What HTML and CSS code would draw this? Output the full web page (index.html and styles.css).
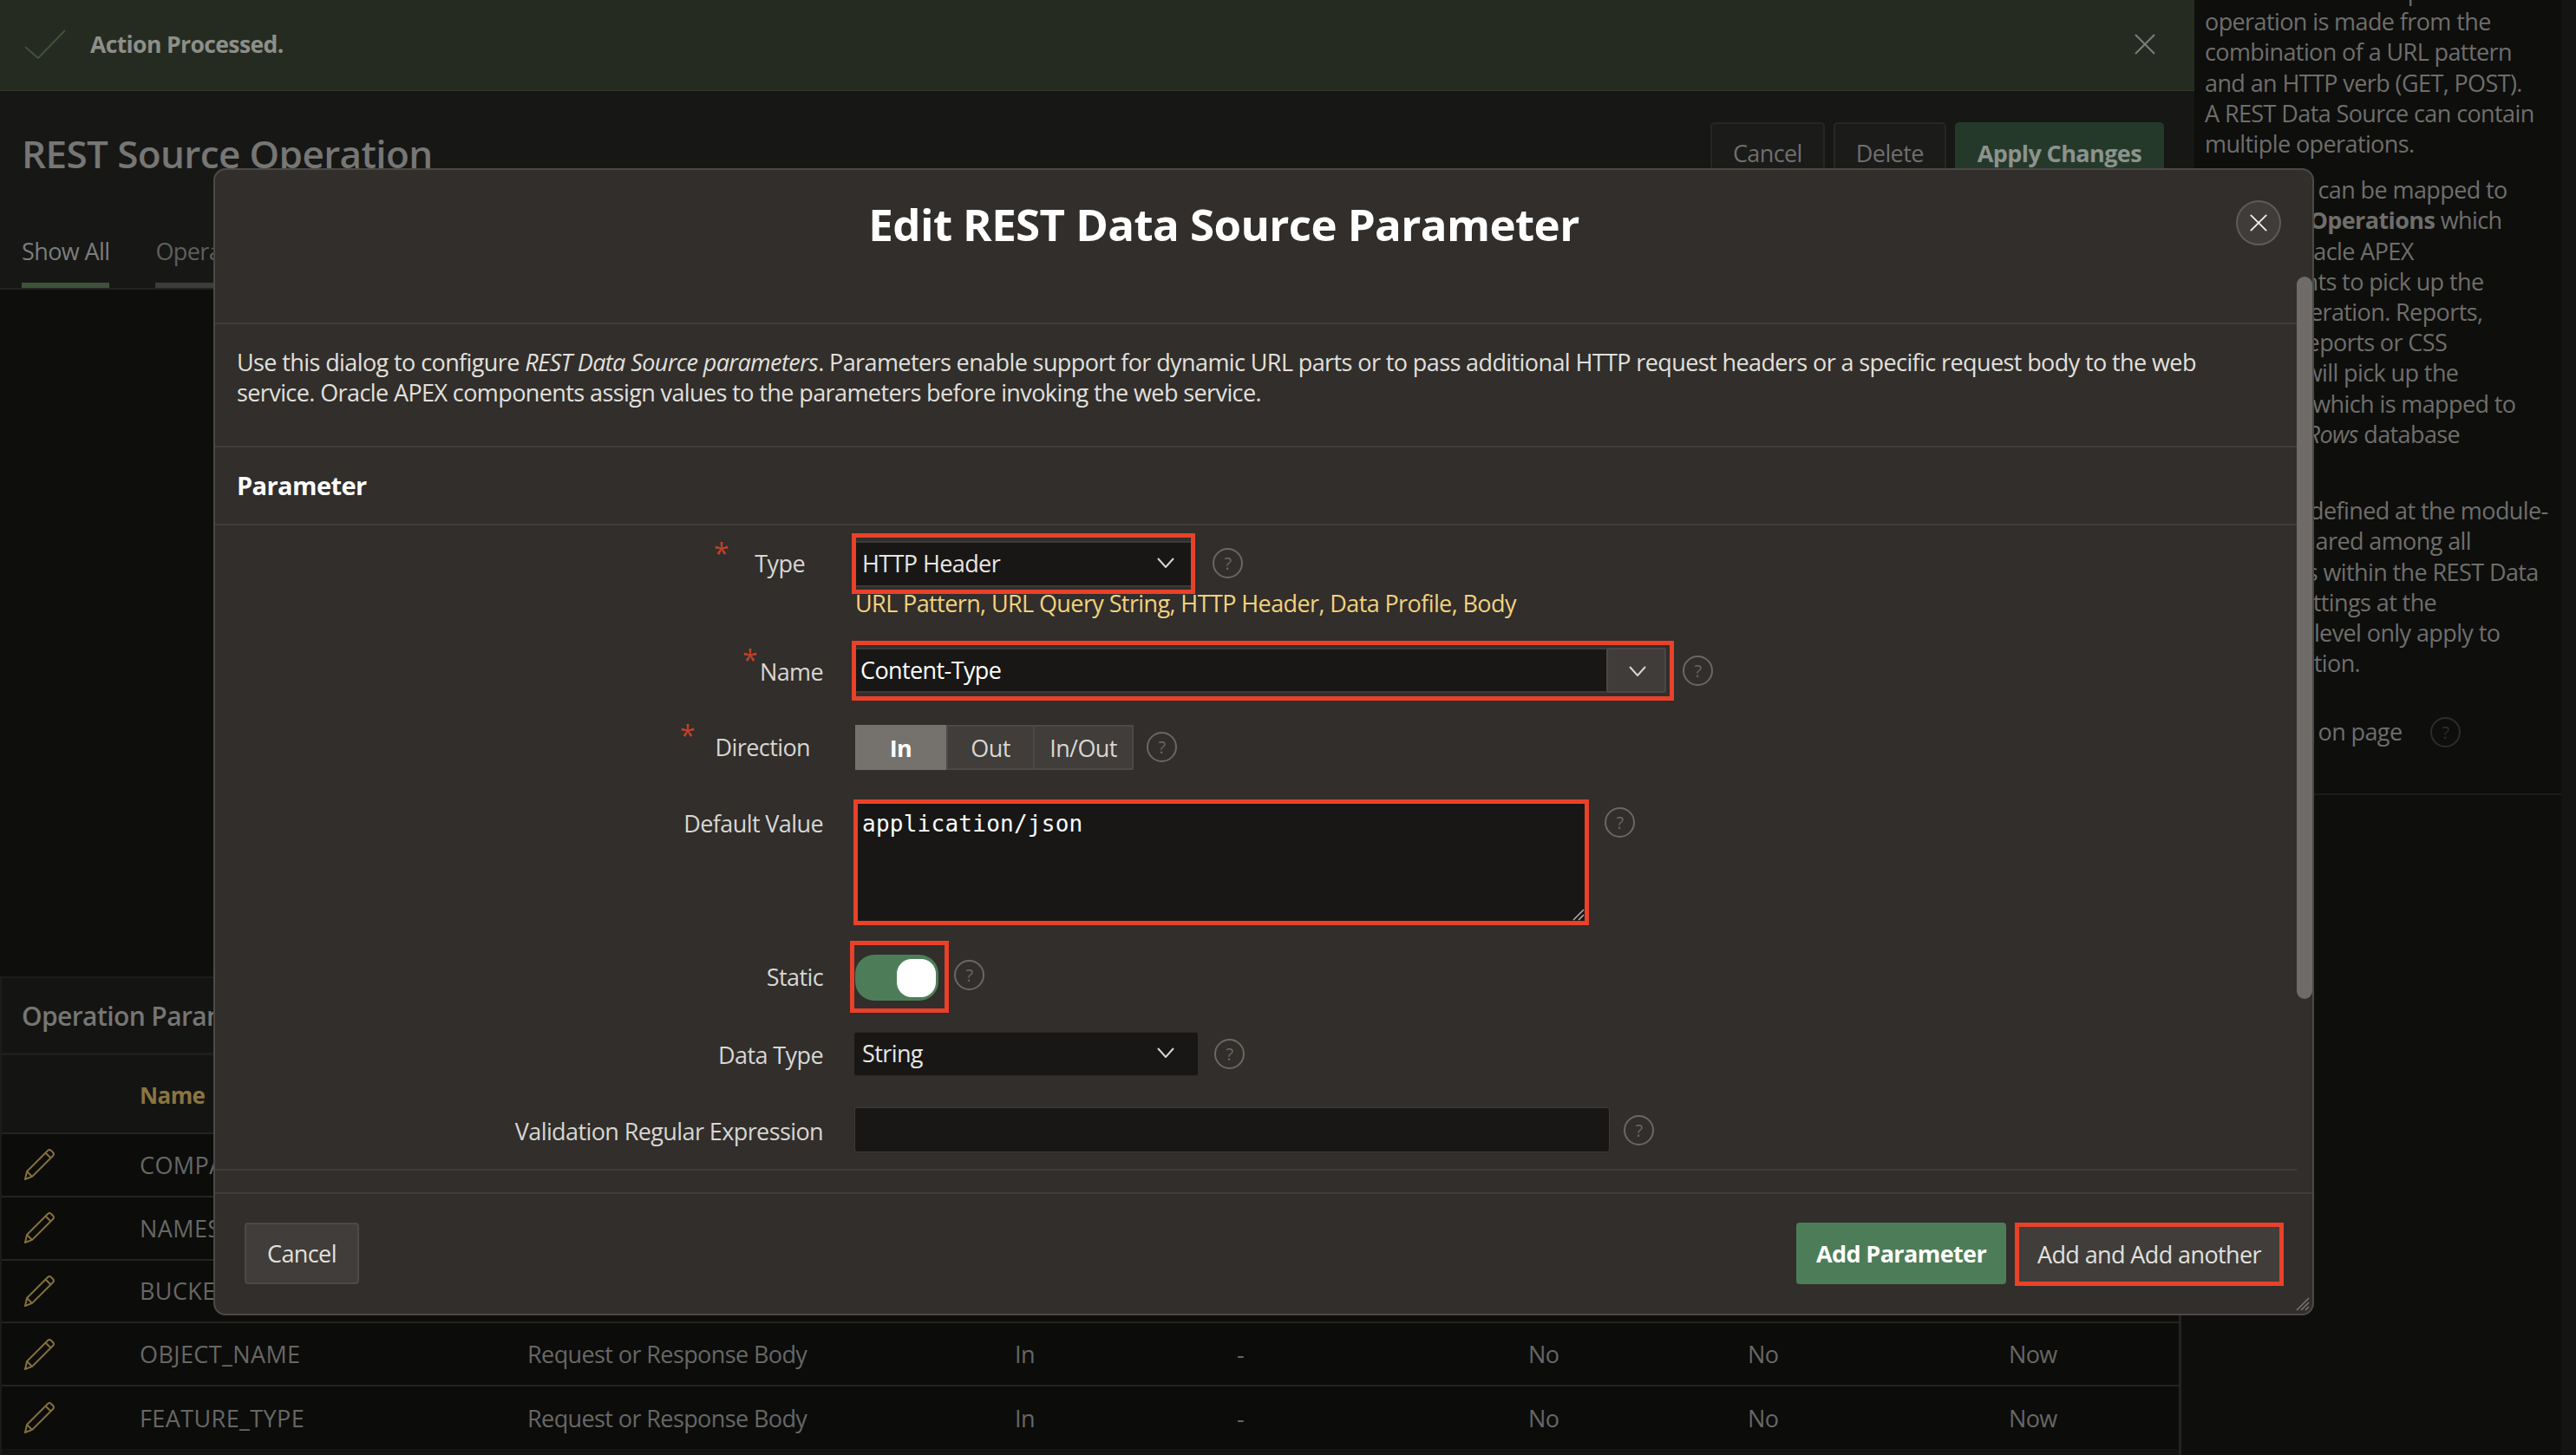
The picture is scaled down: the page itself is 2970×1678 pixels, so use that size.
FILE: index.html
```html
<!DOCTYPE html>
<html lang="en">
<head>
    <meta charset="UTF-8">
    <title>Edit REST Data Source Parameter</title>
    <link rel="stylesheet" href="styles.css">
</head>
<body>
    <div class="page">
        <div class="main">
            <div class="alert">
                <svg class="alert-check" viewBox="0 0 48 34"><path d="M1 20 L16 33 L47 1"/></svg>
                <span class="alert-text">Action Processed.</span>
                <svg class="alert-close" viewBox="0 0 24 24"><path d="M1 1 L23 23 M23 1 L1 23"/></svg>
            </div>

            <div class="page-head">
                <div class="page-title-row">
                    <h1>REST Source Operation</h1>
                    <div class="page-actions">
                        <button class="page-btn">Cancel</button>
                        <button class="page-btn">Delete</button>
                        <button class="page-btn page-btn-hot">Apply Changes</button>
                    </div>
                </div>
                <div class="tabs">
                    <span class="tab tab-active">Show All</span>
                    <span class="tab">Operation Details</span>
                </div>
            </div>

            <div class="region">
                <h2>Operation Parameters</h2>
                <table class="report">
                    <colgroup>
                        <col class="c1"><col class="c2"><col class="c3"><col class="c4">
                        <col class="c5"><col class="c6"><col class="c7"><col class="c8">
                    </colgroup>
                    <thead>
                        <tr><th></th><th>Name</th><th>Type</th><th>Direction</th><th>Default</th><th>Static</th><th>Required</th><th>Last Updated</th></tr>
                    </thead>
                    <tbody id="rows"></tbody>
                </table>
            </div>
        </div>

        <div class="side">
            <p>REST Data Source operations. An<br>operation is made from the<br>combination of a URL pattern<br>and an HTTP verb (GET, POST).<br>A REST Data Source can contain<br>multiple operations.</p>
            <p>Resources can be mapped to<br>Database <strong>Operations</strong> which<br>lets the Oracle APEX<br>components to pick up the<br>proper operation. Reports,<br>Classical reports or CSS<br>Calendar will pick up the<br>operation which is mapped to<br>the Fetch <em>Rows</em> database<br>call.</p>
            <p class="side-gap">Some are defined at the module-<br>tier and shared among all<br>operations within the REST Data<br>Source. Settings at the<br>operation-level only apply to<br>that operation.</p>
            <div class="side-row"><span>Resources on page</span><span class="help help-dim">?</span></div>
        </div>
    </div>

    <div class="dialog">
        <div class="dlg-title">
            <h2>Edit REST Data Source Parameter</h2>
            <span class="dlg-close"><svg viewBox="0 0 24 24"><path d="M2 2 L22 22 M22 2 L2 22"/></svg></span>
        </div>

        <div class="dlg-intro">
            Use this dialog to configure <em>REST Data Source parameters</em>. Parameters enable support for dynamic URL parts or to pass additional HTTP request headers or a specific request body to the web service. Oracle APEX components assign values to the parameters before invoking the web service.
        </div>

        <div class="dlg-section">Parameter</div>

        <div class="form">
            <div class="row row-type">
                <label class="lbl">Type<i class="req">*</i></label>
                <div class="field-col">
                    <div class="field-line">
                        <div class="mark">
                            <div class="select">HTTP Header<svg class="chev" viewBox="0 0 20 12"><path d="M1 1 L10 11 L19 1"/></svg></div>
                        </div>
                        <span class="help">?</span>
                    </div>
                    <div class="hint">URL Pattern, URL Query String, HTTP Header, Data Profile, Body</div>
                </div>
            </div>

            <div class="row row-name">
                <label class="lbl">Name<i class="req">*</i></label>
                <div class="mark">
                    <div class="combo">
                        <span class="combo-text">Content-Type</span>
                        <span class="combo-btn"><svg class="chev" viewBox="0 0 20 12"><path d="M1 1 L10 11 L19 1"/></svg></span>
                    </div>
                </div>
                <span class="help">?</span>
            </div>

            <div class="row row-dir">
                <label class="lbl">Direction<i class="req">*</i></label>
                <div class="pills">
                    <span class="pill pill-on">In</span>
                    <span class="pill pill-out">Out</span>
                    <span class="pill pill-inout">In/Out</span>
                </div>
                <span class="help">?</span>
            </div>

            <div class="row row-default">
                <label class="lbl">Default Value</label>
                <div class="mark">
                    <div class="textarea">application/json
                        <svg class="grip" viewBox="0 0 14 14"><path d="M1 13 L13 1 M7 13 L13 7"/></svg>
                    </div>
                </div>
                <span class="help">?</span>
            </div>

            <div class="row row-static">
                <label class="lbl">Static</label>
                <div class="mark">
                    <div class="switch"><span class="knob"></span></div>
                </div>
                <span class="help">?</span>
            </div>

            <div class="row row-data">
                <label class="lbl">Data Type</label>
                <div class="select">String<svg class="chev" viewBox="0 0 20 12"><path d="M1 1 L10 11 L19 1"/></svg></div>
                <span class="help">?</span>
            </div>

            <div class="row row-regex">
                <label class="lbl">Validation Regular Expression</label>
                <div class="input"></div>
                <span class="help">?</span>
            </div>
        </div>

        <div class="dlg-foot">
            <button class="btn">Cancel</button>
            <div class="foot-right">
                <button class="btn btn-hot">Add Parameter</button>
                <button class="btn btn-mark">Add and Add another</button>
            </div>
        </div>

        <div class="scrollbar"></div>
        <svg class="dlg-grip" viewBox="0 0 16 16"><path d="M1 15 L15 1 M6 15 L15 6 M11 15 L15 11"/></svg>
    </div>

    <script>
        var rowsData = [
            ["COMPARTMENT_ID", "Request or Response Body"],
            ["NAMESPACE", "Request or Response Body"],
            ["BUCKET_NAME", "Request or Response Body"],
            ["OBJECT_NAME", "Request or Response Body"],
            ["FEATURE_TYPE", "Request or Response Body"]
        ];
        var pencil = '<svg class="pencil" viewBox="0 0 36 36"><path d="M1 35 L3 26 L27 2 Q29 0 31 2 L33 4 Q35 6 33 8 L9 32 Z M3 26 L9 32 M24.5 4.5 L30.5 10.5"/></svg>';
        var html = "";
        rowsData.forEach(function(row) {
            html += "<tr><td>" + pencil + "</td><td>" + row[0] + "</td><td>" + row[1] + "</td><td>In</td><td>-</td><td>No</td><td>No</td><td>Now</td></tr>";
        });
        document.getElementById("rows").innerHTML = html;
    </script>
</body>
</html>
```

FILE: styles.css
```css
* {
 box-sizing: border-box;
}

html, body {
 margin: 0;
 height: 1678px;
 overflow: hidden;
 background-color: #0e0e0d;
 font-family: "Open Sans", "Noto Sans", sans-serif;
 font-size: 27px;
 line-height: 35px;
 letter-spacing: -0.6px;
}

.page {
 display: flex;
 height: 1678px;
}

.main {
 width: 2530px;
 display: flex;
 flex-direction: column;
}

/* success message on top */
.alert {
 height: 105px;
 display: flex;
 align-items: center;
 padding: 0 45px 2px 28px;
 background-color: #262b22;
 border-bottom: 1px solid #30382c;
 color: #8d8f89;
}

.alert-check {
 width: 48px;
 height: 34px;
 margin-right: 28px;
 fill: none;
 stroke: #43503a;
 stroke-width: 2;
}

.alert-text {
 font-size: 26.5px;
 font-weight: 700;
}

.alert-close {
 width: 24px;
 height: 24px;
 margin-left: auto;
 fill: none;
 stroke: #7b7f78;
 stroke-width: 2;
}

.page-head {
 height: 229px;
 background-color: #171716;
 border-bottom: 2px solid #232322;
 display: flex;
 flex-direction: column;
 justify-content: space-between;
 padding: 36px 35px 0 25px;
}

.page-title-row {
 display: flex;
 justify-content: space-between;
}

.page-title-row h1 {
 margin: 0;
 padding-top: 6px;
 font-size: 44px;
 line-height: 60px;
 font-weight: 600;
 color: #767674;
}

.page-actions {
 display: flex;
 gap: 10px;
}

.page-btn {
 height: 71px;
 padding: 0 24px;
 border: 2px solid #262625;
 border-radius: 5px;
 background-color: #1b1b1a;
 color: #6f6f6d;
 font: inherit;
 letter-spacing: inherit;
}

.page-btn-hot {
 padding: 0 24px;
 border-color: #25392b;
 background-color: #25392b;
 color: #8c938d;
 font-weight: 700;
}

.tabs {
 display: flex;
 gap: 53px;
}

.tab {
 height: 59px;
 line-height: 33px;
 border-bottom: 6px solid #3c3c3a;
 color: #5f5f5d;
}

.tab-active {
 border-bottom-color: #3e5239;
 color: #7d7d7b;
}

.region {
 margin-top: auto;
 margin-right: 15px;
 height: 552px;
 background-color: #141413;
 border-top: 2px solid #1c1c1b;
 border-right: 3px solid #232322;
 border-left: 2px solid #1c1c1b;
}

.region h2 {
 margin: 0;
 height: 89px;
 padding: 26px 0 0 23px;
 font-size: 30px;
 font-weight: 600;
 color: #767674;
 border-bottom: 3px solid #1e1e1d;
}

.report {
 width: 2510px;
 border-collapse: collapse;
 table-layout: fixed;
}

.c1 { width: 159px; }
.c2 { width: 447px; }
.c3 { width: 562px; }
.c4 { width: 256px; }
.c5 { width: 336px; }
.c6 { width: 253px; }
.c7 { width: 301px; }
.c8 { width: 196px; }

.report th {
 height: 90px;
 padding: 3px 0 0 0;
 text-align: left;
 font-weight: 700;
 font-size: 26px;
 color: #8a7540;
 background-color: #141413;
}

.report td {
 height: 72.8px;
 padding: 0;
 color: #676765;
 background-color: #0c0c0b;
 border-top: 2px solid #232322;
}

.report td:nth-child(2) {
 letter-spacing: 0.4px;
}

.pencil {
 display: block;
 width: 36px;
 height: 36px;
 margin-left: 26px;
 fill: none;
 stroke: #83703e;
 stroke-width: 2;
}

/* right help column */
.side {
 flex: 1;
 min-width: 0;
 margin-top: -28px;
 padding-left: 12px;
 line-height: 35.2px;
 white-space: nowrap;
 color: #6f6e6b;
 border-right: 17px solid #141413;
 height: 1706px;
}

.side p {
 margin: 0 0 18px 0;
}

.side .side-gap {
 margin-top: 17px;
}

.side-row {
 display: flex;
 justify-content: space-between;
 margin-top: 44px;
 padding: 0 116px 53px 12px;
 margin-left: -12px;
 border-bottom: 2px solid #1c1c1b;
 align-items: center;
}

.help {
 flex: none;
 width: 35px;
 height: 35px;
 border: 2px solid #6a6764;
 border-radius: 50%;
 color: #6a6764;
 font-size: 20px;
 line-height: 31px;
 text-align: center;
}

.side .help-dim {
 border-color: #2d2d2c;
 color: #2d2d2c;
 line-height: 31px;
}

/* modal dialog */
.dialog {
 position: absolute;
 left: 246px;
 top: 194px;
 width: 2422px;
 height: 1323px;
 display: flex;
 flex-direction: column;
 background-color: #312e2b;
 border: 2px solid #4c4946;
 border-radius: 14px;
 overflow: hidden;
 color: #e2e0dd;
}

.dlg-title {
 position: relative;
 height: 178px;
 flex: none;
 border-bottom: 2px solid #3f3c39;
 text-align: center;
}

.dlg-title h2 {
 margin: 0;
 padding: 26px 92px 0 0;
 font-size: 51px;
 line-height: 72px;
 font-weight: 700;
 letter-spacing: -0.6px;
 color: #fff;
}

.dlg-close {
 position: absolute;
 right: 36px;
 top: 35px;
 width: 52px;
 height: 52px;
 display: flex;
 align-items: center;
 justify-content: center;
 background-color: #3f3c39;
 border: 2px solid #5e5b58;
 border-radius: 50%;
}

.dlg-close svg {
 width: 22px;
 height: 22px;
 fill: none;
 stroke: #f0eeec;
 stroke-width: 2;
}

.dlg-intro {
 height: 142px;
 flex: none;
 padding: 26px 120px 0 25px;
 border-bottom: 2px solid #3f3c39;
}

.dlg-section {
 height: 90px;
 flex: none;
 padding: 26px 0 0 25px;
 border-bottom: 2px solid #3f3c39;
 font-size: 29px;
 font-weight: 700;
 color: #fff;
}

.form {
 height: 744px;
 flex: none;
 padding-top: 9px;
 border-bottom: 2px solid #3f3c39;
 margin-right: 18px;
}

.row {
 display: flex;
 align-items: flex-start;
}

.lbl {
 flex: none;
 width: 703px;
 margin-right: 34px;
 text-align: right;
 padding-right: 2px;
 white-space: nowrap;
 color: #d8d6d3;
}

.req {
 position: absolute;
 font-size: 32px;
 color: #c0412a;
 font-style: normal;
}

.mark {
 flex: none;
 border: 5px solid #e9412a;
 overflow: hidden;
}

.select {
 position: relative;
 width: 396px;
 height: 51px;
 flex: none;
 padding: 6px 0 0 9px;
 line-height: 35px;
 background-color: #181715;
 border-top: 2px solid #3d3a37;
 border-bottom: 2px solid #3d3a37;
 border-radius: 3px;
 color: #e8e6e3;
}

.chev {
 position: absolute;
 width: 20px;
 height: 12px;
 fill: none;
 stroke: #d8d6d3;
 stroke-width: 2;
}

.select .chev {
 left: 349px;
 top: 17px;
}

.field-col {
 flex: none;
}

.field-line {
 display: flex;
 align-items: flex-start;
}

.hint {
 margin: -4px 0 0 1px;
 line-height: 30px;
 white-space: nowrap;
 color: #f3d27e;
}

/* each row sits at its own height */
.row-type .lbl { padding: 17px 23px 0 0; }
.row-type .req { margin: -12px 0 0 -105px; }
.row-type .field-line .mark {
 margin: 0 0 0 -3px;
 width: 396px;
 height: 70px;
 padding: 4px 0 0 0;
}
.row-type .select { margin-left: -2px; height: 53px; }
.row-type .help { margin: 17px 0 0 20px; }

.row-name { margin-top: 28px; }
.row-name .lbl { padding-top: 18px; }
.row-name .req { margin: -14px 0 0 -93px; }
.row-name .mark {
 margin-left: -3px;
 width: 948px;
 height: 69px;
 padding: 3px 4px 0 0;
}
.row-name .help { margin: 17px 0 0 10px; }

.combo {
 display: flex;
 height: 52px;
 background-color: #181715;
 border-top: 2px solid #3d3a37;
 border-bottom: 2px solid #3d3a37;
}

.combo-text {
 flex: 1;
 padding: 6px 0 0 5px;
 color: #fff;
}

.combo-btn {
 position: relative;
 width: 69px;
 margin: -2px 0;
 height: 52px;
 background-color: #3f3c39;
 border: 2px solid #4a4744;
 border-radius: 3px;
}

.combo-btn .chev {
 left: 24px;
 top: 19px;
}

.row-dir { margin-top: 28px; }
.row-dir .lbl { padding: 8px 17px 0 0; }
.row-dir .req { margin: -14px 0 0 -150px; }
.row-dir .help { margin: 8px 0 0 15px; }

.pills {
 display: flex;
 height: 52px;
 margin-left: 1px;
}

.pill {
 display: flex;
 align-items: center;
 justify-content: center;
 background-color: #403d3a;
 border: 2px solid #4c4946;
 color: #d8d6d3;
}

.pill-on {
 width: 105px;
 background-color: #75726e;
 border-color: #75726e;
 font-weight: 700;
 color: #fff;
}

.pill-out { width: 102px; }
.pill-inout { width: 114px; border-left: 0; }

.row-default { margin-top: 34px; }
.row-default .lbl { padding-top: 10px; }
.row-default .mark {
 margin-left: -1px;
 width: 848px;
 height: 145px;
}
.row-default .help { margin: 9px 0 0 18px; }

.textarea {
 position: relative;
 height: 135px;
 padding: 6px 0 0 5px;
 background-color: #181715;
 font-family: "DejaVu Sans Mono", "Liberation Mono", monospace;
 letter-spacing: 0.25px;
 font-size: 26px;
 color: #fff;
}

.grip {
 position: absolute;
 right: 0;
 bottom: 0;
 width: 14px;
 height: 14px;
 fill: none;
 stroke: #b5b3b0;
 stroke-width: 1.5;
}

.row-static { margin-top: 18px; }
.row-static .lbl { padding-top: 24px; }
.row-static .mark {
 margin-left: -5px;
 width: 114px;
 height: 83px;
 padding: 11px 0 0 1px;
}
.row-static .help { margin: 22px 0 0 6px; }

.switch {
 position: relative;
 width: 96px;
 height: 53px;
 background-color: #4d7d58;
 border-radius: 22px;
}

.knob {
 position: absolute;
 right: 3px;
 top: 5px;
 width: 45px;
 height: 44px;
 background-color: #fff;
 border-radius: 17px;
}

.row-data { margin-top: 22px; }
.row-data .lbl { padding-top: 9px; }
.row-data .help { margin: 8px 0 0 19px; }
.row-data .select { border-color: #2b2927; border-width: 1px; }

.row-regex { margin-top: 36px; }
.row-regex .lbl { padding-top: 10px; }
.row-regex .help { margin: 9px 0 0 16px; }

.input {
 width: 871px;
 height: 52px;
 flex: none;
 background-color: #181715;
 border: 1px solid #3d3a37;
 border-radius: 3px;
}

.dlg-foot {
 flex: 1;
 margin-top: 25px;
 display: flex;
 justify-content: space-between;
 align-items: flex-start;
 padding: 33px 33px 0 34px;
 border-top: 2px solid #3f3c39;
}

.foot-right {
 display: flex;
 gap: 10px;
}

.btn {
 height: 71px;
 padding: 0 24px;
 border: 2px solid #4c4946;
 border-radius: 4px;
 background-color: #403d3a;
 color: #e2e0dd;
 font: inherit;
 letter-spacing: inherit;
}

.btn-hot {
 width: 242px;
 padding: 0;
 background-color: #4d7d58;
 border-color: #4d7d58;
 font-weight: 700;
 color: #fff;
}

.btn-mark {
 width: 310px;
 height: 73px;
 padding: 0;
 border: 5px solid #e9412a;
 border-radius: 0;
}

.scrollbar {
 position: absolute;
 right: 0;
 top: 123px;
 width: 18px;
 height: 833px;
 background-color: #6e6b68;
 border-radius: 9px;
}

.dlg-grip {
 position: absolute;
 right: 3px;
 bottom: 3px;
 width: 16px;
 height: 16px;
 fill: none;
 stroke: #7a7774;
 stroke-width: 1.5;
}
```
